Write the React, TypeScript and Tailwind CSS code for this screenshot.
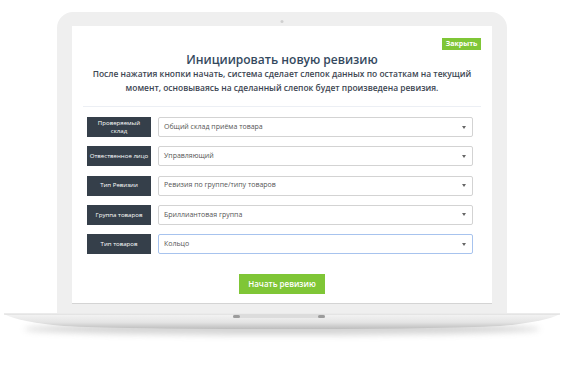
const rows = [
  { label: ['Проверяемый', 'склад'], value: 'Общий склад приёма товара' },
  { label: ['Отвественное лицо'], value: 'Управляющий' },
  { label: ['Тип Ревизии'], value: 'Ревизия по группе/типу товаров' },
  { label: ['Группа товаров'], value: 'Бриллиантовая группа' },
  { label: ['Тип товаров'], value: 'Кольцо', active: true },
];

function LaptopBase() {
  return (
    <svg width="564" height="48" viewBox="0 0 564 48" className="block">
      <defs>
        <linearGradient id="baseFill" x1="0" y1="0" x2="0" y2="1">
          <stop offset="0" stopColor="#f4f4f4" />
          <stop offset="0.55" stopColor="#e4e4e4" />
          <stop offset="1" stopColor="#bdbdbd" />
        </linearGradient>
        <filter id="blur" x="-10%" y="-100%" width="120%" height="300%">
          <feGaussianBlur stdDeviation="3" />
        </filter>
      </defs>
      <ellipse cx="282" cy="16" rx="258" ry="6" fill="#a0a0a0" opacity="0.45" filter="url(#blur)" />
      <path d="M4 1 L560 1 Q545 9 500 13 Q440 16 282 16 Q124 16 64 13 Q19 9 4 1 Z" fill="url(#baseFill)" />
      <path d="M4 1 L560 1" stroke="#d6d6d6" strokeWidth="1" />
      <rect x="233" y="1" width="92" height="4" rx="2" fill="#dcdcdc" />
      <rect x="233" y="2" width="7" height="3" rx="1.5" fill="#9c9c9c" />
      <rect x="318" y="2" width="7" height="3" rx="1.5" fill="#9c9c9c" />
    </svg>
  );
}

export default function App() {
  return (
    <div
      className="flex h-[373px] w-[564px] flex-col items-center overflow-hidden bg-white pt-[12px]"
      style={{ fontFamily: '"Open Sans", "Noto Sans", sans-serif' }}
    >
      <div className="relative w-[450px] rounded-t-[16px] bg-[#efefef] px-[15px] pb-[9px] pt-[14px]">
        <div className="absolute left-1/2 top-[8px] h-[3px] w-[3px] -translate-x-1/2 rounded-full bg-[#cfcfcf]" />
        <div className="flex h-[278px] w-[420px] flex-col border-b border-[#d4d4d4] bg-white">
          <div className="flex justify-end pr-[11px] pt-[12px]">
            <button className="h-[12px] w-[39px] bg-[#7fc636] text-[7px] font-bold leading-[12px] text-white">
              Закрыть
            </button>
          </div>
          <h1 className="mt-[2px] text-center text-[12px] font-semibold leading-[16px] text-[#34495e]">
            Инициировать новую ревизию
          </h1>
          <p className="mx-auto -mt-[1px] w-[390px] text-center text-[8.45px] font-semibold leading-[14px] text-[#3d4652]">
            После нажатия кнопки начать, система сделает слепок данных по остаткам на текущий
            момент, основываясь на сделанный слепок будет произведена ревизия.
          </p>
          <div className="mx-[11px] mt-[11px] h-px bg-[#eceff4]" />
          <div className="mt-[10px] flex flex-col gap-[9.3px] pl-[15px] pr-[19px]">
            {rows.map((r) => (
              <div key={r.value} className="flex h-[20px] gap-[7px]">
                <div className="flex w-[64px] flex-col items-center justify-center whitespace-nowrap bg-[#353f4a] text-center text-[6.1px] leading-[8.5px] text-white">
                  {r.label.map((l) => (
                    <span key={l}>{l}</span>
                  ))}
                </div>
                <div
                  className={
                    r.active
                      ? 'flex flex-1 items-center justify-between rounded-[2px] border border-[#a7c3ee] bg-white pl-[5px] pr-[6px] text-[7px] text-[#555]'
                      : 'flex flex-1 items-center justify-between rounded-[2px] border border-[#d3d3d3] bg-white pl-[5px] pr-[6px] text-[7px] text-[#555]'
                  }
                >
                  <span>{r.value}</span>
                  <span className="h-0 w-0 border-x-[2.5px] border-t-[3px] border-x-transparent border-t-[#666]" />
                </div>
              </div>
            ))}
          </div>
          <div className="mt-[20px] flex justify-center">
            <button className="h-[20px] w-[86px] bg-[#7fc636] text-[8px] font-semibold text-white">
              Начать ревизию
            </button>
          </div>
        </div>
      </div>
      <LaptopBase />
    </div>
  );
}
